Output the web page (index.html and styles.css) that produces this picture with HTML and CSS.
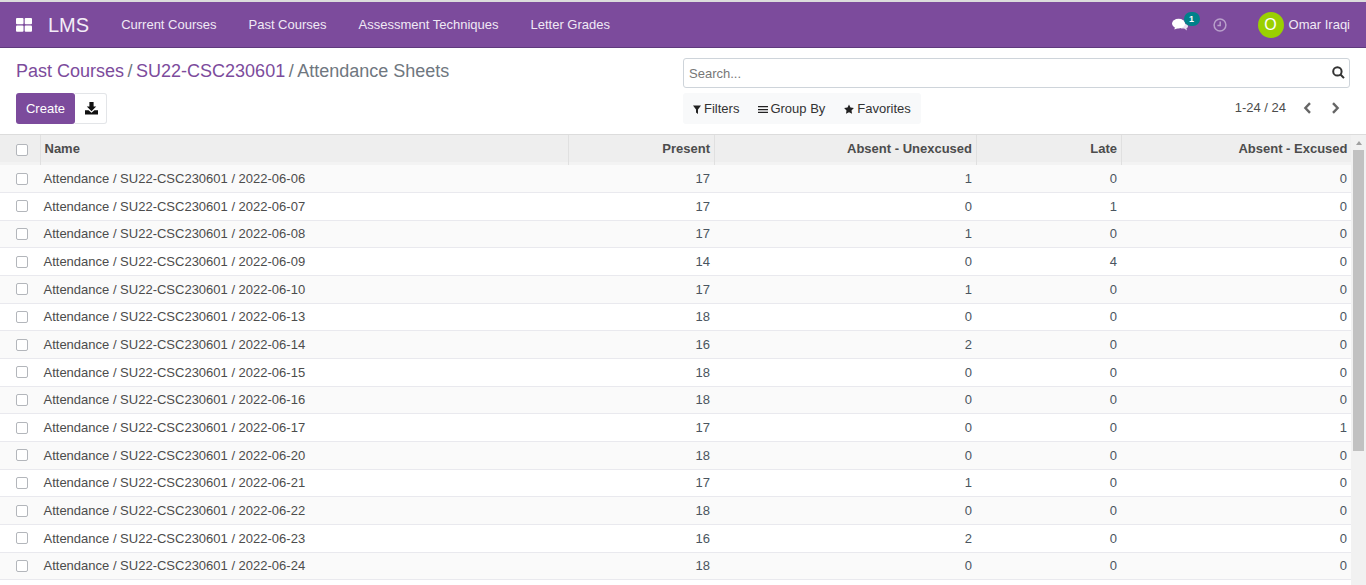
FILE: index.html
```html
<!DOCTYPE html>
<html lang="en">
<head>
<meta charset="utf-8">
<title>Attendance Sheets</title>
<link rel="stylesheet" href="styles.css">
</head>
<body>
<header class="navbar">
  <svg class="apps" viewBox="0 0 16 14" width="16" height="14"><rect x="0" y="0" width="7.5" height="6.2" rx="1"/><rect x="8.7" y="0" width="7.3" height="6.2" rx="1"/><rect x="0" y="7.6" width="7.5" height="6.2" rx="1"/><rect x="8.7" y="7.6" width="7.3" height="6.2" rx="1"/></svg>
  <span class="brand">LMS</span>
  <nav class="menu"><a>Current Courses</a><a>Past Courses</a><a>Assessment Techniques</a><a>Letter Grades</a></nav>
  <div class="systray">
    <span class="chat">
      <svg viewBox="0 0 16 14" width="16" height="14"><path class="bubble-b" d="M9 6h4.5c1.4 0 2.5 1 2.5 2.2 0 1-.7 1.8-1.6 2.1l.6 2.2-2.8-2H9z"/><ellipse class="bubble-f" cx="6.6" cy="5.6" rx="6.6" ry="4.8"/><path class="bubble-f" d="M3 9l-.6 2.6L6.5 10z"/></svg>
      <b class="badge">1</b>
    </span>
    <svg class="clock" viewBox="0 0 14 14" width="14" height="14"><circle cx="7" cy="7" r="5.9"/><path d="M7.2 3.4v4H4.4"/></svg>
    <span class="user"><span class="avatar">O</span><span class="uname">Omar Iraqi</span></span>
  </div>
</header>
<section class="control">
  <div class="control-left">
    <h1 class="crumbs"><a>Past Courses</a><i>/</i><a>SU22-CSC230601</a><i>/</i><span>Attendance Sheets</span></h1>
    <div class="buttons">
      <button class="btn-create">Create</button>
      <button class="btn-export"><svg viewBox="0 0 13 13" width="13" height="13"><path d="M4.4 0h4.2v4.6h2.6L6.5 9.2 1.8 4.6h2.6z"/><path d="M0 8.2h3.6l2.9 2.6 2.9-2.6H13V12.6H0z"/></svg></button>
    </div>
  </div>
  <div class="control-right">
    <div class="search"><span>Search...</span>
      <svg viewBox="0 0 13 13" width="13" height="13"><circle cx="5.4" cy="5.4" r="4.2"/><path d="M8.5 8.5l3.5 3.6"/></svg>
    </div>
    <div class="tools">
      <div class="filters">
        <span class="ftool"><svg viewBox="0 0 8 9" width="8" height="9"><path d="M0 .5h8L5 4.4V9L3 7.6V4.4z"/></svg>Filters</span>
        <span class="ftool"><svg viewBox="0 0 10 9" width="10" height="9"><path d="M0 1h10v1.3H0zM0 3.9h10v1.3H0zM0 6.8h10v1.3H0z"/></svg>Group By</span>
        <span class="ftool"><svg viewBox="0 0 10 10" width="10" height="10"><path d="M5 .4l1.5 3.1 3.4.5-2.4 2.4.6 3.4L5 8.2 2 9.8l.5-3.4L.1 4l3.4-.5z"/></svg>Favorites</span>
      </div>
      <div class="pager"><span>1-24 / 24</span>
        <svg viewBox="0 0 9 12" width="9" height="12"><path d="M7 1.2L2.4 6 7 10.8"/></svg>
        <svg viewBox="0 0 9 12" width="9" height="12"><path d="M2 1.2L6.6 6 2 10.8"/></svg>
      </div>
    </div>
  </div>
</section>
<main class="list">
<div class="list-body">
<table>
<colgroup><col class="c0"><col class="c1"><col class="c2"><col class="c3"><col class="c4"><col class="c5"></colgroup>
<thead><tr><th class="sel"><span class="cb"></span></th><th class="lft">Name</th><th>Present</th><th>Absent - Unexcused</th><th>Late</th><th>Absent - Excused</th></tr></thead>
<tbody>
<tr><td class="sel"><span class="cb"></span></td><td class="lft">Attendance / SU22-CSC230601 / 2022-06-06</td><td>17</td><td>1</td><td>0</td><td>0</td></tr>
<tr><td class="sel"><span class="cb"></span></td><td class="lft">Attendance / SU22-CSC230601 / 2022-06-07</td><td>17</td><td>0</td><td>1</td><td>0</td></tr>
<tr><td class="sel"><span class="cb"></span></td><td class="lft">Attendance / SU22-CSC230601 / 2022-06-08</td><td>17</td><td>1</td><td>0</td><td>0</td></tr>
<tr><td class="sel"><span class="cb"></span></td><td class="lft">Attendance / SU22-CSC230601 / 2022-06-09</td><td>14</td><td>0</td><td>4</td><td>0</td></tr>
<tr><td class="sel"><span class="cb"></span></td><td class="lft">Attendance / SU22-CSC230601 / 2022-06-10</td><td>17</td><td>1</td><td>0</td><td>0</td></tr>
<tr><td class="sel"><span class="cb"></span></td><td class="lft">Attendance / SU22-CSC230601 / 2022-06-13</td><td>18</td><td>0</td><td>0</td><td>0</td></tr>
<tr><td class="sel"><span class="cb"></span></td><td class="lft">Attendance / SU22-CSC230601 / 2022-06-14</td><td>16</td><td>2</td><td>0</td><td>0</td></tr>
<tr><td class="sel"><span class="cb"></span></td><td class="lft">Attendance / SU22-CSC230601 / 2022-06-15</td><td>18</td><td>0</td><td>0</td><td>0</td></tr>
<tr><td class="sel"><span class="cb"></span></td><td class="lft">Attendance / SU22-CSC230601 / 2022-06-16</td><td>18</td><td>0</td><td>0</td><td>0</td></tr>
<tr><td class="sel"><span class="cb"></span></td><td class="lft">Attendance / SU22-CSC230601 / 2022-06-17</td><td>17</td><td>0</td><td>0</td><td>1</td></tr>
<tr><td class="sel"><span class="cb"></span></td><td class="lft">Attendance / SU22-CSC230601 / 2022-06-20</td><td>18</td><td>0</td><td>0</td><td>0</td></tr>
<tr><td class="sel"><span class="cb"></span></td><td class="lft">Attendance / SU22-CSC230601 / 2022-06-21</td><td>17</td><td>1</td><td>0</td><td>0</td></tr>
<tr><td class="sel"><span class="cb"></span></td><td class="lft">Attendance / SU22-CSC230601 / 2022-06-22</td><td>18</td><td>0</td><td>0</td><td>0</td></tr>
<tr><td class="sel"><span class="cb"></span></td><td class="lft">Attendance / SU22-CSC230601 / 2022-06-23</td><td>16</td><td>2</td><td>0</td><td>0</td></tr>
<tr><td class="sel"><span class="cb"></span></td><td class="lft">Attendance / SU22-CSC230601 / 2022-06-24</td><td>18</td><td>0</td><td>0</td><td>0</td></tr>
</tbody>
</table>
</div>
<div class="scrollbar"><span class="sb-up"></span><span class="sb-thumb"></span></div>
</main>
</body>
</html>
```

FILE: styles.css
```css
* { box-sizing: border-box; }
html, body { height: 100%; }
body {
  margin: 0;
  display: flex;
  flex-direction: column;
  overflow: hidden;
  background: #fff;
  color: #4c4c4c;
  font: 13px/1.5 "Liberation Sans", Arial, sans-serif;
}
.navbar {
  flex: none;
  height: 48px;
  display: flex;
  align-items: center;
  border-top: 2px solid #dcdcdc;
  border-bottom: 1px solid #5f3a7d;
  background: #7c4b9c;
  color: #fff;
  padding-left: 16px;
}
.apps { fill: #fff; }
.brand { font-size: 20px; margin-left: 16px; line-height: 1; color: #f3edf7; }
.menu { display: flex; margin-left: 16px; }
.menu a { padding: 0 16px; color: #f0e9f5; font-size: 13px; }
.systray { margin-left: auto; display: flex; align-items: center; padding-right: 16px; }
.chat { position: relative; width: 16px; height: 14px; display: block; }
.chat svg { display: block; }
.bubble-f { fill: #fff; }
.bubble-b { fill: #e9dff0; }
.badge {
  position: absolute;
  left: 12px;
  top: -6px;
  min-width: 16px;
  height: 14px;
  border-radius: 7px;
  background: #00818a;
  color: #fff;
  font-size: 9px;
  line-height: 14px;
  text-align: center;
}
.clock { margin-left: 25px; fill: none; stroke: #b9a0cb; stroke-width: 1.5; }
.user { display: flex; align-items: center; margin-left: 31px; }
.avatar {
  width: 26px;
  height: 26px;
  border-radius: 50%;
  background: #9ad000;
  color: #fff;
  font-size: 16px;
  line-height: 26px;
  text-align: center;
}
.uname { margin-left: 5px; color: #f0e9f5; }
.control {
  flex: none;
  height: 86px;
  display: flex;
  justify-content: space-between;
  padding: 10px 16px 0;
}
.control-left { width: 651px; }
.crumbs { margin: 0; font-size: 18px; font-weight: 400; line-height: 27px; color: #777; display: flex; }
.crumbs a { color: #7c4b9c; }
.crumbs i { font-style: normal; margin: 0 3.5px; color: #6c757d; }
.crumbs span { color: #6f7780; }
.buttons { display: flex; margin-top: 8px; }
.btn-create {
  width: 59px;
  height: 31px;
  border: 0;
  border-radius: 3px;
  background: #7c4b9c;
  color: #fff;
  font: inherit;
  padding: 0;
}
.btn-export {
  width: 32px;
  height: 31px;
  border: 1px solid #e3e5e8;
  border-left: 0;
  border-radius: 0 3px 3px 0;
  background: #fff;
  display: flex;
  align-items: center;
  justify-content: center;
  padding: 0 0 0 1px;
}
.btn-export svg { fill: #111; }
.control-right { width: 667px; }
.search {
  height: 30px;
  border: 1px solid #ced4da;
  border-radius: 3px;
  display: flex;
  align-items: center;
  justify-content: space-between;
  padding: 1px 4px 0 5px;
  color: #777;
}
.search svg { fill: none; stroke: #333; stroke-width: 2; margin-top: -2px; }
.tools { display: flex; justify-content: space-between; align-items: center; margin-top: 5px; }
.filters {
  display: flex;
  height: 31px;
  align-items: center;
  gap: 18px;
  padding: 0 10px;
  background: #f8f9fa;
  border-radius: 3px;
  color: #333;
}
.ftool { display: flex; align-items: center; gap: 3px; }
.ftool:nth-child(2) { gap: 2px; margin-left: 1px; }
.ftool:nth-child(3) { margin-left: 1px; }
.ftool svg { fill: #222; margin-top: 1px; }
.pager { display: flex; align-items: center; padding-right: 10px; margin-top: -2px; }
.pager svg { fill: none; stroke: #666; stroke-width: 2.4; margin-left: 19px; }
.pager svg:first-of-type { margin-left: 17px; }
.list {
  flex: 1;
  min-height: 0;
  display: flex;
  border-top: 1px solid #dcdcdc;
}
.list-body { flex: 1; min-width: 0; overflow: hidden; }
.scrollbar {
  flex: none;
  width: 15px;
  background: #f1f1f1;
  display: flex;
  flex-direction: column;
  align-items: center;
}
.sb-up {
  flex: none;
  width: 0;
  height: 0;
  margin: 6px 0 5px;
  border-left: 3px solid transparent;
  border-right: 3px solid transparent;
  border-bottom: 4px solid #a0a0a0;
}
.sb-thumb { flex: none; width: 11px; height: 301px; background: #c1c1c1; }
table { width: 100%; border-collapse: collapse; table-layout: fixed; }
.c0 { width: 40px; }
.c1 { width: 528px; }
.c2 { width: 146px; }
.c3 { width: 262px; }
.c4 { width: 145px; }
th {
  height: 30px;
  padding: 0 3.5px 3px 4px;
  background: linear-gradient(#eeeeee 27px, #f3f3f3 0);
  border-left: 1px solid #e0e0e0;
  text-align: right;
  font-weight: 700;
  color: #4c4c4c;
}
th.sel { border-left: 0; }
th.lft { text-align: left; }
td {
  height: 27.67px;
  padding: 0 4px;
  border-bottom: 1px solid #e9e9ee;
  text-align: right;
  color: #4a5560;
}
td.lft { text-align: left; padding-left: 3.5px; color: #4c4c4c; }
tbody tr:nth-child(odd) { background: #fafafa; }
.sel { padding: 0; text-align: center; }
th.sel { padding-bottom: 1px; }
.cb {
  display: block;
  width: 12px;
  height: 12px;
  margin: 0 0 0 16px;
  border: 1px solid #b3b6bb;
  border-radius: 2px;
  background: #fff;
}
```
